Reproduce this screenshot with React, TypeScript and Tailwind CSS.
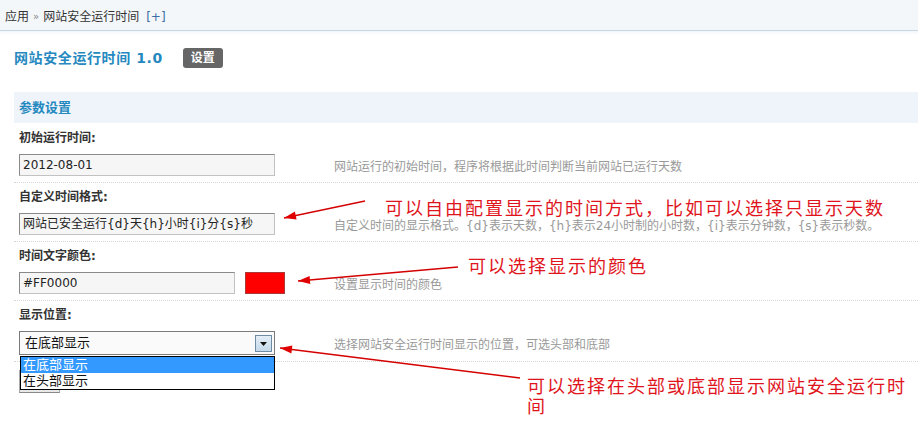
const baseFont = { fontFamily: '"DejaVu Sans", "Noto Sans CJK SC", sans-serif' };

interface FieldRowProps {
  label: string;
  help: string;
  first?: boolean;
  children: React.ReactNode;
}

function FieldRow({ label, help, first, children }: FieldRowProps) {
  return (
    <div className={`${first ? "pt-[7px]" : "pt-[6px]"} pb-[6px] border-b border-dotted border-[#d6d6d6] pl-[5px]`}>
      <div className="h-[16px] leading-[16px] text-[12px] font-bold text-[#333]">{label}</div>
      <div className="mt-[8px] flex items-center">
        <div className="w-[315px] flex items-center shrink-0">{children}</div>
        <div className="text-[12px] text-[#999] leading-[16px] pt-[3px] whitespace-nowrap">{help}</div>
      </div>
    </div>
  );
}

function TextBox({ value, width }: { value: string; width: string }) {
  return (
    <div
      className={`${width} h-[22px] bg-[#f6f6f6] border border-[#c2c2c2] border-t-[#8a8a8a] border-l-[#8a8a8a] px-[3px] flex items-center text-[12px] text-[#222] whitespace-nowrap overflow-hidden`}
    >
      {value}
    </div>
  );
}

function Arrow({ from, tip, head }: { from: [number, number]; tip: [number, number]; head: string }) {
  return (
    <>
      <line x1={from[0]} y1={from[1]} x2={tip[0]} y2={tip[1]} stroke="#d40000" strokeWidth="1.3" />
      <polygon points={head} fill="#e00000" />
    </>
  );
}

export default function App() {
  return (
    <div className="relative w-[918px] h-[428px] overflow-hidden bg-white" style={baseFont}>
      {/* Breadcrumb */}
      <div className="h-[31px] bg-[#f3f7fa] border-b border-[#c8d8e4] pl-[5px] pt-[3px] flex items-center text-[12px] text-[#333] whitespace-nowrap">
        <span>应用</span>
        <span className="mx-[4px] text-[#888] text-[10px]">»</span>
        <span>网站安全运行时间</span>
        <span className="ml-[7px] text-[#3a6ea5]">[+]</span>
      </div>
      <div className="h-[4px] bg-gradient-to-b from-[#f2f6f9] to-white" />

      <div className="pl-[14px]">
        {/* Title */}
        <div className="mt-[13px] h-[20px] flex items-center">
          <span className="text-[14px] font-bold text-[#2589c0] tracking-[0.6px] whitespace-nowrap">网站安全运行时间 1.0</span>
          <span className="ml-[20px] w-[40px] h-[20px] rounded-[3px] bg-[#666] text-white text-[12px] font-bold flex items-center justify-center">
            设置
          </span>
        </div>

        {/* Section header */}
        <div className="mt-[24px] h-[31px] bg-[#eef4fa] pl-[5px] flex items-center">
          <span className="text-[13px] font-bold text-[#2589c0]">参数设置</span>
        </div>

        <FieldRow first label="初始运行时间:" help="网站运行的初始时间，程序将根据此时间判断当前网站已运行天数">
          <TextBox value="2012-08-01" width="w-[256px]" />
        </FieldRow>

        <FieldRow
          label="自定义时间格式:"
          help="自定义时间的显示格式。{d}表示天数，{h}表示24小时制的小时数，{i}表示分钟数，{s}表示秒数。"
        >
          <TextBox value="网站已安全运行{d}天{h}小时{i}分{s}秒" width="w-[256px]" />
        </FieldRow>

        <FieldRow label="时间文字颜色:" help="设置显示时间的颜色">
          <TextBox value="#FF0000" width="w-[216px]" />
          <div className="ml-[10px] w-[40px] h-[22px] bg-[#ff0000] border border-[#a83a3a]" />
        </FieldRow>

        <FieldRow label="显示位置:" help="选择网站安全运行时间显示的位置，可选头部和底部">
          <div className="relative w-[256px] h-[24px] bg-[#fafafa] border border-[#7b7b7b] flex items-center pl-[5px] text-[13px] text-[#111]">
            <span>在底部显示</span>
            <div className="absolute right-[2px] top-[3px] w-[17px] h-[17px] border border-[#6f8ca5] bg-gradient-to-b from-[#e4eef6] to-[#c4d9ea] flex items-center justify-center">
              <svg width="7" height="4" viewBox="0 0 7 4">
                <polygon points="0,0 7,0 3.5,4" fill="#111" />
              </svg>
            </div>
            {/* open dropdown list */}
            <div className="absolute left-0 top-[24px] w-[255px] bg-white border border-black z-10 text-[13px]">
              <div className="h-[16px] leading-[16px] bg-[#3399ff] text-white pl-[2px]">在底部显示</div>
              <div className="h-[16px] leading-[16px] text-[#111] pl-[2px]">在头部显示</div>
            </div>
          </div>
        </FieldRow>

        <div className="pl-[5px] mt-[8px]">
          <div className="w-[41px] h-[23px] bg-[#e8e8e8] border border-[#aaa] border-b-[#888]" />
        </div>
      </div>

      {/* Annotations */}
      <svg className="absolute left-0 top-0 pointer-events-none" width="918" height="428">
        <Arrow from={[365, 201]} tip={[284, 218]} head="284,218 294.9,211.6 296.6,219.4" />
        <Arrow from={[458, 267]} tip={[298, 281]} head="298,281 309.6,276 310.3,283.9" />
        <Arrow from={[520, 378]} tip={[280, 348]} head="280,348 292.4,345.5 291.4,353.5" />
      </svg>
      <div
        className="absolute left-[385px] top-[197px] text-[18px] leading-[20px] tracking-[2px] text-[#e0141c] whitespace-nowrap"
        style={{ fontFamily: '"Noto Sans CJK SC", sans-serif' }}
      >
        可以自由配置显示的时间方式，比如可以选择只显示天数
      </div>
      <div
        className="absolute left-[468px] top-[255px] text-[18px] leading-[20px] tracking-[2px] text-[#e0141c] whitespace-nowrap"
        style={{ fontFamily: '"Noto Sans CJK SC", sans-serif' }}
      >
        可以选择显示的颜色
      </div>
      <div
        className="absolute left-[527px] top-[375px] w-[390px] text-[18px] leading-[20px] tracking-[2px] text-[#e0141c]"
        style={{ fontFamily: '"Noto Sans CJK SC", sans-serif' }}
      >
        可以选择在头部或底部显示网站安全运行时间
      </div>
    </div>
  );
}
